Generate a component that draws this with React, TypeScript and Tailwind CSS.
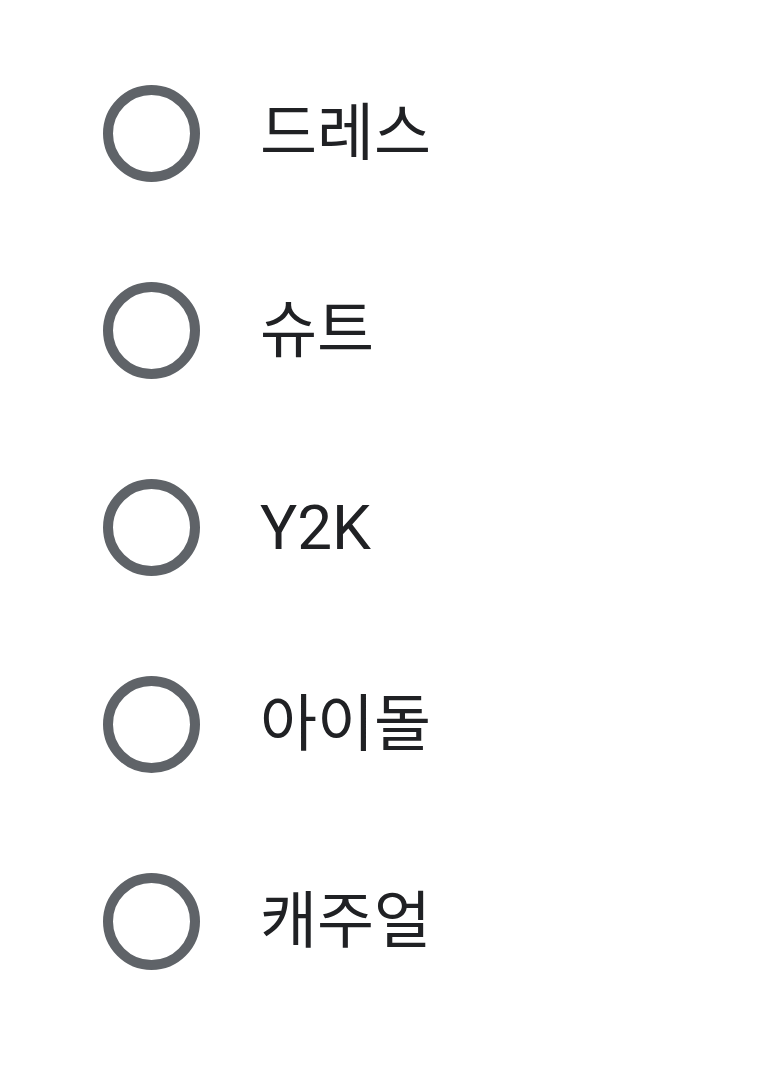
const styles = ["드레스", "슈트", "Y2K", "아이돌", "캐주얼"];

export default function App() {
  return (
    <div className="min-h-[1070px] bg-white pt-[35px] pl-[103px] font-['Roboto','Noto_Sans_CJK_KR',sans-serif]">
      {styles.map((label) => (
        <label key={label} className="flex items-center h-[197px] gap-[60px] cursor-pointer">
          <span className="w-[97px] h-[97px] shrink-0 rounded-full border-[10px] border-[#5f6368]" />
          <span className="text-[62px] leading-none text-[#202124]">{label}</span>
        </label>
      ))}
    </div>
  );
}
